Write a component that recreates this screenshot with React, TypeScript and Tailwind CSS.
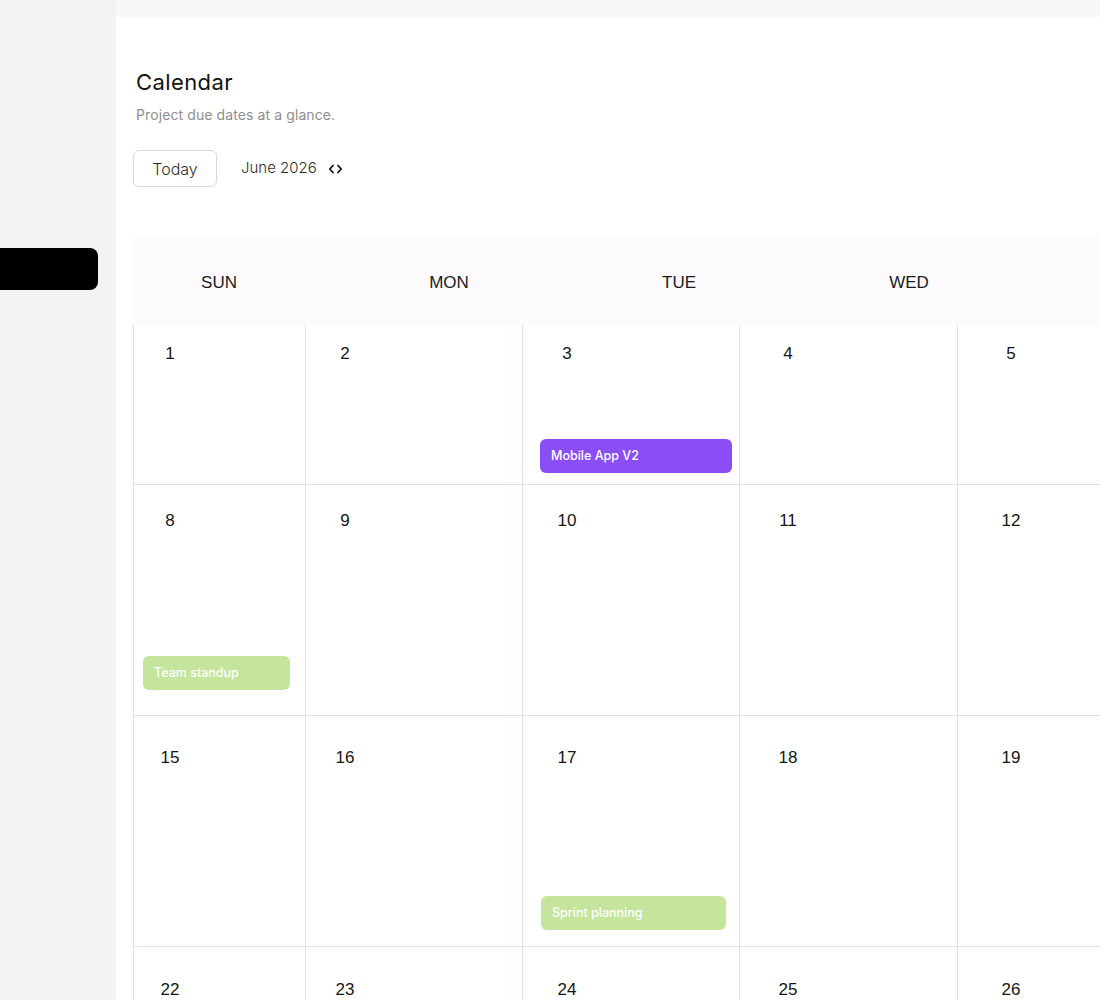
import React from "react";

type Ev = { day: number; title: string; cls: string };

const events: Ev[] = [
  { day: 3, title: "Mobile App V2", cls: "bg-[#8a4df6] ml-[17px] mr-[7px]" },
  { day: 8, title: "Team standup", cls: "bg-[#c4e59b] ml-[9px] mr-[15px]" },
  { day: 17, title: "Sprint planning", cls: "bg-[#c4e59b] ml-[18px] mr-[13px]" },
];

const days = ["SUN", "MON", "TUE", "WED"];
const cols = 5;

// each week row has slightly different spacing
const rows = [
  { start: 1, h: "h-[159px]", date: "pt-[18px]", ev: "pb-[11px]" },
  { start: 8, h: "h-[231px]", date: "pt-[25px]", ev: "pb-[25px]" },
  { start: 15, h: "h-[231px]", date: "pt-[31px]", ev: "pb-[16px]" },
  { start: 22, h: "h-[231px]", date: "pt-[32px]", ev: "pb-[16px]" },
];

const colW = ["w-[172px]", "w-[217px]", "w-[217px]", "w-[218px]", "w-[300px]"];
const dateX = ["ml-[20px]", "ml-[23px]", "ml-[28px]", "ml-[32px]", "ml-[37px]"];

function Chevrons() {
  return (
    <svg width="15" height="12" viewBox="0 0 15 12" fill="none" stroke="#111" strokeWidth="1.8" strokeLinecap="round" strokeLinejoin="round">
      <path d="M5 2.5 1.8 6 5 9.5" />
      <path d="M10 2.5 13.2 6 10 9.5" />
    </svg>
  );
}

function Cell({ n, col, row }: { n: number; col: number; row: (typeof rows)[number] }) {
  const ev = events.find((e) => e.day === n);
  return (
    <div className={`${colW[col]} shrink-0 border-l border-[#ebdce5] flex flex-col justify-between ${row.date} ${row.ev}`}>
      <div className={`${dateX[col]} w-8 text-center text-[17px] leading-[22px] text-[#151515] font-['Liberation_Sans',sans-serif]`}>
        {n}
      </div>
      {ev && (
        <div className={`${ev.cls} h-[34px] rounded-md flex items-center px-[11px] text-[12.5px] font-medium text-white`}>
          {ev.title}
        </div>
      )}
    </div>
  );
}

export default function App() {
  return (
    <div className="flex w-[1100px] h-[1000px] overflow-hidden bg-white font-['Inter',sans-serif]">
      <aside className="w-[116px] shrink-0 bg-[#f3f2f5]">
        <div className="mt-[248px] w-[98px] h-[42px] bg-black rounded-r-lg" />
      </aside>

      <main className="flex-1 min-w-0 overflow-hidden">
        <div className="h-[17px] bg-[#f8f7fa]" />
        <div className="pl-[17px] pt-[51px]">
          <h1 className="ml-[3px] text-[22px] leading-7 text-[#141414] tracking-[0.4px]">Calendar</h1>
          <p className="ml-[3px] mt-[9px] text-[14px] leading-5 text-[#8e8e8e] tracking-[0.1px]">Project due dates at a glance.</p>

          <div className="mt-[25px] flex items-center">
            <button className="w-[84px] h-[37px] rounded-md border border-[#d9d9d9] text-[16px] font-light text-[#2b2b2b]">
              Today
            </button>
            <span className="ml-6 text-[15px] font-light text-[#2b2b2b]">June 2026</span>
            <span className="ml-[11px] flex items-center">
              <Chevrons />
            </span>
          </div>

          <div className="mt-[50px] w-[1200px]">
            <div className="h-[88px] bg-[#fcfafd] flex items-center pt-[3px]">
              <div className="-ml-[29px] flex">
                {days.map((d) => (
                  <div key={d} className="w-[230px] shrink-0 text-center text-[17px] text-[#1a1a1a] font-['Liberation_Sans',sans-serif]">
                    {d}
                  </div>
                ))}
              </div>
            </div>
            {rows.map((row, ri) => (
              <div key={ri} className={`${row.h} flex ${ri > 0 ? "border-t border-[#ebdce5]" : ""}`}>
                {Array.from({ length: cols }, (_, ci) => (
                  <Cell key={ci} n={row.start + ci} col={ci} row={row} />
                ))}
              </div>
            ))}
          </div>
        </div>
      </main>
    </div>
  );
}
